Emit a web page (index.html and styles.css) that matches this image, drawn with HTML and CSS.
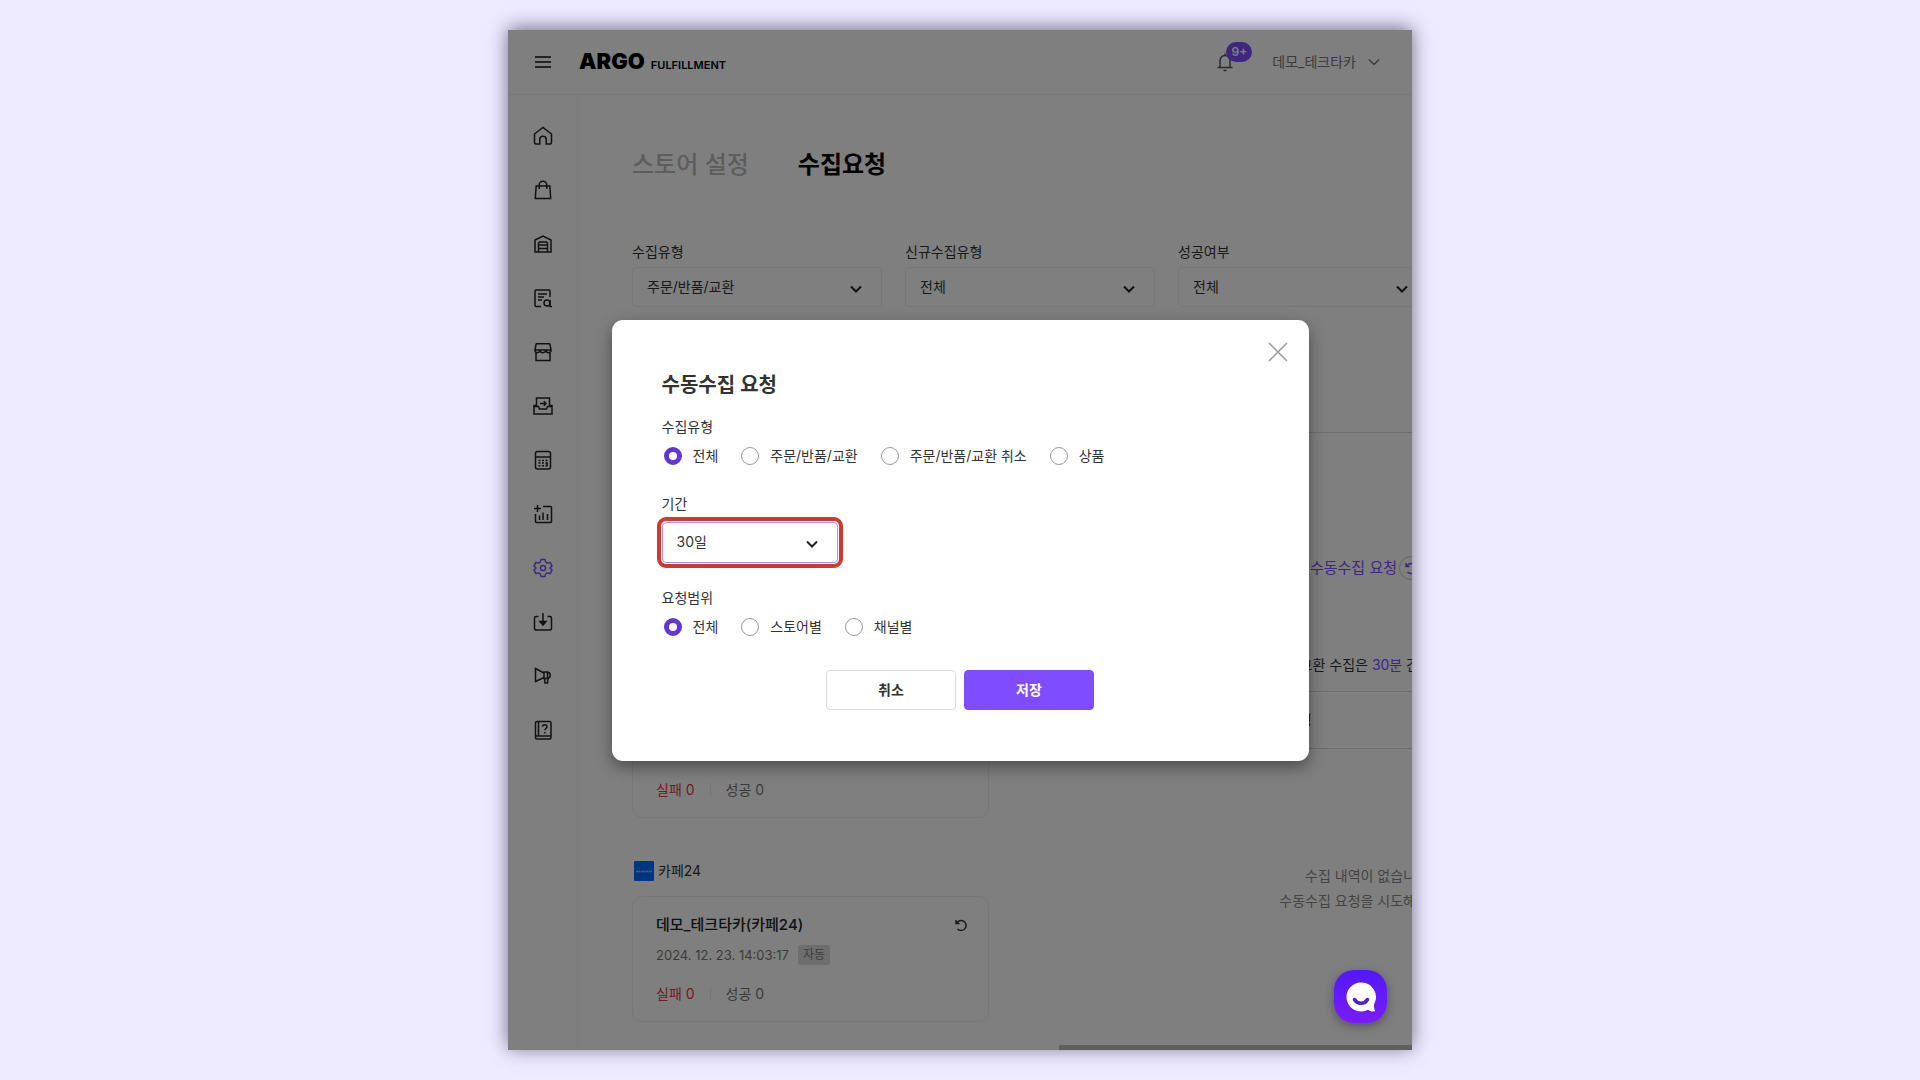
FILE: index.html
```
<!DOCTYPE html>
<html lang="ko">
<head>
  <meta charset="UTF-8">
  <title>수집요청 - ARGO FULFILLMENT</title>
  <link rel="stylesheet" href="styles.css">
</head>
<body>

<div class="app">
  <header class="header">
    <button class="icon-btn" aria-label="메뉴">
      <svg width="16" height="12" viewBox="0 0 16 12"><path d="M0 1h16M0 6h16M0 11h16"/></svg>
    </button>
    <a class="logo" href="#"><b>ARGO</b><span>FULFILLMENT</span></a>
    <div class="header-right">
      <button class="icon-btn bell" aria-label="알림">
        <svg width="18" height="20" viewBox="0 0 18 20"><path d="M4 15V8.500a5 5 0 0 1 10 0V15M1.500 15.500h15M9 1.500v2M7.500 18.500h3"/></svg>
        <span class="badge">9+</span>
      </button>
      <button class="account">데모_테크타카
        <svg width="12" height="8" viewBox="0 0 12 8"><path d="M1 1.500l5 5 5-5"/></svg>
      </button>
    </div>
  </header>

  <div class="body">
    <nav class="sidebar">
      <a href="#" aria-label="홈"><svg viewBox="0 0 20 20"><path d="M1.500 8L10 1.500 18.500 8v8.500a1.500 1.500 0 0 1-1.500 1.500h-3.800v-4.500a3.200 3.200 0 0 0-6.400 0V18H3a1.500 1.500 0 0 1-1.500-1.500z"/></svg></a>
      <a href="#" aria-label="주문"><svg viewBox="0 0 20 20"><path d="M3.200 6h13.600l.9 12.500H2.300zM6.200 9V5a3.800 3.800 0 0 1 7.600 0v4"/></svg></a>
      <a href="#" aria-label="창고"><svg viewBox="0 0 20 20"><path d="M2 6l8-4 8 4v12H2zM5.500 18V9.500a1.500 1.500 0 0 1 1.500-1.500h6a1.500 1.500 0 0 1 1.500 1.500V18M5.500 11h9M5.500 14.500h9"/></svg></a>
      <a href="#" aria-label="조회"><svg viewBox="0 0 20 20"><path d="M8 18.500H3a1 1 0 0 1-1-1V3a1 1 0 0 1 1-1h13a1 1 0 0 1 1 1v6M5 6h9M5 9h6M5 12h4"/><circle cx="14" cy="15" r="3"/><path d="M17 12v6.500h2"/></svg></a>
      <a href="#" aria-label="스토어"><svg viewBox="0 0 20 20"><path d="M2 8l1-5.500a1 1 0 0 1 1-.8h12a1 1 0 0 1 1 .8L18 8zM2 8c0 3.500 4.500 3.500 5 0 0 3.500 5.500 3.500 6 0 0 3.500 5 3.500 5 0M3 10.500v8h14v-8"/></svg></a>
      <a href="#" aria-label="입고"><svg viewBox="0 0 20 20"><path d="M3.500 10V2h13v8M3.500 9.500H1V18h18V9.500h-2.500M1.500 10.500h4l1 2.500h7l1-2.500h4M7 7.500h6M10.800 5.200L13 7.500l-2.200 2.300"/></svg></a>
      <a href="#" aria-label="정산"><svg viewBox="0 0 20 20"><rect x="2.500" y="1.500" width="15" height="17.500" rx="2"/><path d="M2.500 7h15"/><path stroke-dasharray="2 1.500" d="M5.500 10.500h9M5.500 13h9M5.500 15.700h9"/><path d="M14 12.500v3.500"/></svg></a>
      <a href="#" aria-label="통계"><svg viewBox="0 0 20 20"><path d="M10 2.500h7.500a1 1 0 0 1 1 1v14a1 1 0 0 1-1 1h-14a1 1 0 0 1-1-1V10M4.500 1v7M1 4.500h7M6.500 11.500V16M10 8.500V16M14.500 10v6"/></svg></a>
      <a href="#" class="active" aria-label="설정"><svg viewBox="0 0 20 20"><path d="M8 1.500h4l.7 2.600 1.800 1 2.600-.7 1.900 3.400-1.900 1.900v.6l1.900 1.900-1.900 3.400-2.600-.7-1.800 1-.7 2.600H8l-.7-2.600-1.800-1-2.600.7L1 12.200l1.900-1.900v-.6L1 7.800l1.900-3.400 2.600.7 1.800-1z"/><circle cx="10" cy="10" r="2.600"/></svg></a>
      <a href="#" aria-label="다운로드"><svg viewBox="0 0 20 20"><path d="M5.500 4.500H3a1.500 1.500 0 0 0-1.500 1.500v10.500A1.500 1.500 0 0 0 3 18h14a1.500 1.500 0 0 0 1.500-1.500V6A1.500 1.500 0 0 0 17 4.500h-2.500M10 1v10"/><path fill="currentColor" d="M7 9.500h6l-3 3.500z"/></svg></a>
      <a href="#" aria-label="공지"><svg viewBox="0 0 20 20"><path d="M2.500 2.500v13l8.500-4V7zM11 6h3.500a3.300 3.300 0 0 1 0 6.500H11zM14.500 6v6.500M11.500 12.500l.5 4.500h2.500l.5-4.500"/></svg></a>
      <a href="#" aria-label="도움말"><svg viewBox="0 0 20 20"><rect x="2.500" y="1.500" width="15.500" height="17.500" rx="1.500"/><path d="M2.500 16h15.500M5.500 1.500V16M9.500 6.800c0-2.600 4.500-2.600 4.500 0 0 1.700-2.200 1.700-2.200 3.500M11.800 12v1.500"/></svg></a>
    </nav>

    <main class="main">
      <div class="tabs">
        <a href="#">스토어 설정</a>
        <a href="#" class="on">수집요청</a>
      </div>

      <div class="filters">
        <div class="field">
          <label for="type">수집유형</label>
          <div class="select"><select id="type"><option>주문/반품/교환</option></select><svg viewBox="0 0 12 8"><path d="M1 1.500l5 5 5-5"/></svg></div>
        </div>
        <div class="field">
          <label for="newType">신규수집유형</label>
          <div class="select"><select id="newType"><option>전체</option></select><svg viewBox="0 0 12 8"><path d="M1 1.500l5 5 5-5"/></svg></div>
        </div>
        <div class="field">
          <label for="result">성공여부</label>
          <div class="select"><select id="result"><option>전체</option></select><svg viewBox="0 0 12 8"><path d="M1 1.500l5 5 5-5"/></svg></div>
        </div>
      </div>

      <div class="toolbar">
        <button class="link-btn">수동수집 요청</button>
        <button class="round-btn bordered" aria-label="새로고침"><svg viewBox="0 0 14 14"><path d="M2 2v3.500h3.500M2.500 5.500a5 5 0 1 1 1 5.500"/></svg></button>
      </div>

      <div class="columns">
        <div class="stores">
          <section>
            <h3></h3>
            <div class="card">
              <h4></h4>
              <p class="date"></p>
              <p class="counts"><span class="fail">실패 0</span><i></i><span>성공 0</span></p>
            </div>
          </section>
          <section>
            <h3><svg width="20" height="20" viewBox="0 0 20 20"><rect width="20" height="20" rx="1" fill="#006cff"/><path d="M2 10.500h16" stroke="#8fc0ff" stroke-dasharray="2 0.500"/></svg>카페24</h3>
            <div class="card">
              <h4>데모_테크타카(카페24)<button class="round-btn" aria-label="다시 수집"><svg viewBox="0 0 14 14"><path d="M2 2v3.500h3.500M2.500 5.500a5 5 0 1 1 1 5.500"/></svg></button></h4>
              <p class="date">2024. 12. 23. 14:03:17<span class="tag">자동</span></p>
              <p class="counts"><span class="fail">실패 0</span><i></i><span>성공 0</span></p>
            </div>
          </section>
        </div>

        <div class="history">
          <p class="notice">주문/반품/교환 수집은 <em>30분</em> 간격으로 진행됩니다.</p>
          <table>
            <thead>
              <tr><th>수집유형</th><th></th></tr>
            </thead>
            <tbody>
              <tr><td colspan="2">수집 내역이 없습니다.<br>수동수집 요청을 시도해주세요.</td></tr>
            </tbody>
          </table>
        </div>
      </div>
    </main>
  </div>

  <div class="overlay">
    <form class="modal" role="dialog" aria-labelledby="modalTitle">
      <button type="button" class="close" aria-label="닫기"><svg width="20" height="20" viewBox="0 0 20 20"><path d="M1 1l18 18M19 1L1 19"/></svg></button>
      <h2 id="modalTitle">수동수집 요청</h2>

      <fieldset>
        <legend>수집유형</legend>
        <div class="radios">
          <label><input type="radio" name="kind" checked>전체</label>
          <label><input type="radio" name="kind">주문/반품/교환</label>
          <label><input type="radio" name="kind">주문/반품/교환 취소</label>
          <label><input type="radio" name="kind">상품</label>
        </div>
      </fieldset>

      <div class="period">
        <label for="period">기간</label>
        <div class="select highlight"><select id="period"><option>30일</option></select><svg viewBox="0 0 12 8"><path d="M1 1.500l5 5 5-5"/></svg></div>
      </div>

      <fieldset>
        <legend>요청범위</legend>
        <div class="radios">
          <label><input type="radio" name="range" checked>전체</label>
          <label><input type="radio" name="range">스토어별</label>
          <label><input type="radio" name="range">채널별</label>
        </div>
      </fieldset>

      <div class="actions">
        <button type="button">취소</button>
        <button type="button" class="primary">저장</button>
      </div>
    </form>
  </div>

  <div class="scrollbar"></div>

  <button class="chat" aria-label="채팅 상담">
    <svg width="32" height="32" viewBox="0 0 32 32"><path fill="#fff" d="M16 1.500a14.500 14.500 0 1 0 7 27.200c2.200 1.600 4.500 2 6.700 1.600.5-.1.600-.5.300-.9-1-1.500-1.200-4-.8-6.500A14.500 14.500 0 0 0 16 1.500z"/><path d="M9.500 18.500c3 5 10 5 13 0" fill="none" stroke="#4a1fd6" stroke-width="3.500" stroke-linecap="round"/></svg>
  </button>
</div>

</body>
</html>
```
FILE: styles.css
```
* {
  box-sizing: border-box;
}

body {
  margin: 0;
  padding: 30px;
  min-height: 100vh;
  background-color: #eeebff;
  font-family: Inter, "Noto Sans CJK KR", sans-serif;
  font-size: 14px;
  line-height: 20px;
  color: #333;
}

h2, h3, h4, p, fieldset, legend {
  margin: 0;
  padding: 0;
  border: 0;
}

button, select {
  font: inherit;
  color: inherit;
}

button {
  padding: 0;
  border: 0;
  background: none;
  cursor: pointer;
}

a {
  color: inherit;
  text-decoration: none;
}

svg {
  display: block;
  fill: none;
  stroke: currentColor;
  stroke-width: 1.5;
}

.app {
  position: relative;
  width: 49%;
  max-width: 904px;
  margin: auto;
  background-color: #fff;
  box-shadow: 0 -2px 18px rgba(30, 24, 50, 0.6);
}

/* header */
.header {
  display: flex;
  align-items: center;
  height: 65px;
  padding: 0 32px 0 27px;
  border-bottom: 1px solid #eee;
}

.header .icon-btn {
  color: #111;
}

.logo {
  display: flex;
  align-items: baseline;
  gap: 6px;
  margin-left: 28px;
  padding-top: 2px;
  color: #000;
}

.logo b {
  font-size: 22px;
  font-weight: 900;
}

.logo span {
  font-size: 11px;
  font-weight: 600;
}

.header-right {
  display: flex;
  align-items: center;
  gap: 38px;
  margin-left: auto;
  color: #777;
}

.header .bell {
  position: relative;
  color: #555;
}

.badge {
  position: absolute;
  left: 10px;
  top: -10px;
  width: 26px;
  border-radius: 10px;
  background-color: #7f4cff;
  color: #fff;
  font-size: 12px;
  font-weight: 600;
}

.account {
  display: flex;
  align-items: center;
  gap: 12px;
}

.body {
  display: flex;
}

/* sidebar */
.sidebar {
  flex: none;
  display: flex;
  flex-direction: column;
  align-items: center;
  gap: 34px;
  width: 70px;
  padding-top: 31px;
  border-right: 1px solid #f6f6f6;
  color: #222;
}

.sidebar svg {
  width: 20px;
  height: 20px;
}

.sidebar .active {
  color: #7f4cff;
}

/* main */
.main {
  flex: 1;
  min-width: 0;
  padding: 0 0 28px 54px;
  overflow: hidden;
}

.tabs {
  display: flex;
  gap: 49px;
  padding: 54px 0 20px;
  border-bottom: 1px solid #fafafa;
  font-size: 24px;
  line-height: 32px;
  font-weight: 500;
  color: #bbb;
}

.tabs .on {
  color: #000;
  font-weight: 600;
}

.filters {
  display: grid;
  grid-template-columns: repeat(3, 250px);
  gap: 23px;
  width: 1096px;
  padding: 40px 0 125px;
  border-bottom: 1px solid #ddd;
}

.field label {
  display: block;
  margin-bottom: 5px;
}

.select {
  position: relative;
}

.select select {
  width: 100%;
  height: 40px;
  padding: 0 14px;
  border: 1px solid #eee;
  border-radius: 4px;
  background-color: #fff;
  appearance: none;
}

.select svg {
  position: absolute;
  right: 20px;
  top: 18px;
  width: 12px;
  height: 8px;
  color: #222;
  stroke-width: 2;
  pointer-events: none;
}

.toolbar {
  display: flex;
  align-items: center;
  justify-content: flex-end;
  gap: 2px;
  width: 791px;
  margin: 123px 0 77px;
}

.link-btn {
  color: #7f4cff;
  font-size: 15px;
}

.round-btn {
  display: grid;
  place-items: center;
  width: 24px;
  height: 24px;
  border-radius: 50%;
  color: #333;
}

.round-btn svg {
  width: 14px;
  height: 14px;
}

.round-btn.bordered {
  border: 1px solid #ccc;
  color: #7f4cff;
}

.columns {
  display: grid;
  grid-template-columns: 357px 718px;
  gap: 21px;
}

.stores section + section {
  margin-top: 43px;
}

.stores h3 {
  display: flex;
  align-items: center;
  gap: 4px;
  height: 20px;
  margin-bottom: 15px;
  padding-left: 2px;
  font-size: 14px;
  font-weight: 400;
}

.stores h3 svg {
  stroke: none;
}

.card {
  padding: 18px 15px 17px 23px;
  border: 1px solid #eee;
  border-radius: 10px;
  color: #777;
}

.card h4 {
  display: flex;
  align-items: center;
  justify-content: space-between;
  height: 20px;
  font-size: 15px;
  font-weight: 500;
  color: #222;
}

.card .date {
  display: flex;
  align-items: center;
  gap: 9px;
  height: 20px;
  margin: 10px 0 19px;
  font-size: 13px;
}

.tag {
  padding: 0 5px;
  border-radius: 2px;
  background-color: #ddd;
  font-size: 12px;
}

.counts {
  display: flex;
  align-items: center;
  gap: 15px;
}

.counts i {
  width: 1px;
  height: 14px;
  background-color: #eee;
}

.fail {
  color: #f03340;
}

.notice {
  height: 34px;
  padding-left: 228px;
  line-height: 16px;
}

.notice em {
  color: #7f4cff;
  font-style: normal;
}

.history table {
  width: 100%;
  border-collapse: collapse;
}

.history th {
  height: 57px;
  padding: 0 0 0 250px;
  border-top: 1px solid #ddd;
  border-bottom: 1px solid #ddd;
  font-weight: 500;
  text-align: left;
}

.history td {
  padding: 114px 0 0;
  line-height: 25px;
  text-align: center;
  color: #888;
}

/* modal */
.overlay {
  position: absolute;
  inset: 0;
  display: grid;
  place-items: center;
  background-color: rgba(0, 0, 0, 0.5);
}

.modal {
  position: relative;
  width: 90%;
  max-width: 697px;
  padding: 51px 50px;
  border-radius: 11px;
  background-color: #fff;
  box-shadow: 0 6px 16px rgba(0, 0, 0, 0.4);
}

.modal h2 {
  margin-bottom: 18px;
  font-size: 20px;
  line-height: 28px;
  font-weight: 600;
}

.close {
  position: absolute;
  right: 21px;
  top: 22px;
  color: #999;
}

.radios {
  display: flex;
  gap: 23px;
  padding: 9px 0 0 2px;
}

.radios label {
  display: flex;
  align-items: center;
  gap: 11px;
}

.radios input {
  width: 18px;
  height: 18px;
  margin: 0;
  border: 1px solid #999;
  border-radius: 50%;
  appearance: none;
}

.radios input:checked {
  border: 5px solid #6236d2;
}

.period {
  margin: 28px 0 25px;
}

.highlight {
  width: 176px;
  margin-top: 8px;
  border-radius: 4px;
  outline: 4px solid #cc3a30;
  outline-offset: 1px;
}

.highlight select {
  display: block;
  height: 41px;
  border-color: #b78df0;
}

.actions {
  display: flex;
  justify-content: center;
  gap: 8px;
  margin-top: 33px;
}

.actions button {
  width: 130px;
  height: 40px;
  border: 1px solid #ddd;
  border-radius: 4px;
  font-weight: 600;
}

.actions .primary {
  border-color: #7f4cff;
  background-color: #7f4cff;
  color: #fff;
}

.scrollbar {
  position: absolute;
  right: 0;
  bottom: 0;
  width: 39%;
  height: 5px;
  background-color: #5f5f5f;
}

.chat {
  position: absolute;
  right: 25px;
  bottom: 27px;
  display: grid;
  place-items: center;
  width: 53px;
  height: 53px;
  border-radius: 20px;
  background: linear-gradient(#5218fa, #7a1cf5);
  box-shadow: 0 3px 10px rgba(0, 0, 0, 0.35);
}

.chat svg {
  stroke: none;
}
```
